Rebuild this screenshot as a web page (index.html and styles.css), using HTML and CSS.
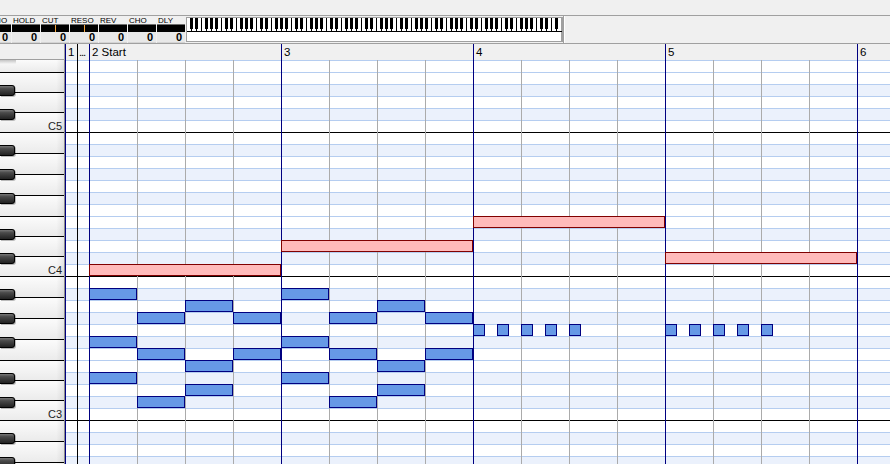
FILE: index.html
```html
<!DOCTYPE html>
<html lang="en">
<head>
<meta charset="utf-8">
<title>Piano Roll</title>
<link rel="stylesheet" href="styles.css">
</head>
<body>
<div class="app">
  <div class="topbar"></div>

  <div class="toolbar">
    <div class="ctl ctl-first"><div class="ctl-label">ECHO</div><div class="ctl-bar"></div><div class="ctl-val">0</div></div>
    <div class="ctl"><div class="ctl-label">HOLD</div><div class="ctl-bar"></div><div class="ctl-val">0</div></div>
    <div class="ctl"><div class="ctl-label">CUT</div><div class="ctl-bar ctl-bar-mid"></div><div class="ctl-val">0</div></div>
    <div class="ctl"><div class="ctl-label">RESO</div><div class="ctl-bar ctl-bar-mid"></div><div class="ctl-val">0</div></div>
    <div class="ctl"><div class="ctl-label">REV</div><div class="ctl-bar"></div><div class="ctl-val">0</div></div>
    <div class="ctl"><div class="ctl-label">CHO</div><div class="ctl-bar"></div><div class="ctl-val">0</div></div>
    <div class="ctl"><div class="ctl-label">DLY</div><div class="ctl-bar"></div><div class="ctl-val">0</div></div>
    <div class="mini-kb">
      <svg class="mini-kb-svg" width="375" height="23" viewBox="0 0 375 23">
        <defs>
          <pattern id="octave" width="35" height="23" patternUnits="userSpaceOnUse">
            <rect x="4" y="0" width="1" height="14" fill="#000"/>
            <rect x="9" y="0" width="1" height="14" fill="#000"/>
            <rect x="14" y="0" width="1" height="14" fill="#000"/>
            <rect x="19" y="0" width="1" height="14" fill="#000"/>
            <rect x="24" y="0" width="1" height="14" fill="#000"/>
            <rect x="29" y="0" width="1" height="14" fill="#000"/>
            <rect x="34" y="0" width="1" height="14" fill="#000"/>
            <rect x="3" y="0" width="3" height="11" fill="#000"/>
            <rect x="8" y="0" width="3" height="11" fill="#000"/>
            <rect x="18" y="0" width="3" height="11" fill="#000"/>
            <rect x="23" y="0" width="3" height="11" fill="#000"/>
            <rect x="28" y="0" width="3" height="11" fill="#000"/>
          </pattern>
        </defs>
        <rect x="0" y="0" width="375" height="23" fill="#fff"/>
        <rect x="0" y="0" width="373" height="14" fill="url(#octave)"/>
        <rect x="374" y="0" width="1" height="23" fill="#a0a0a0"/>
        <rect x="0" y="13" width="375" height="1" fill="#000"/>
      </svg>
    </div>
    <div class="tb-sep"></div>
  </div>

  <div class="ruler">
    <div class="ruler-corner"></div>
    <div class="ruler-track">
      <div class="seg seg-short">1</div>
      <div class="seg seg-short seg-dots">...</div>
      <div class="seg seg-measure">2 Start</div>
      <div class="seg seg-measure">3</div>
      <div class="seg seg-measure">4</div>
      <div class="seg seg-measure">5</div>
      <div class="seg seg-measure">6</div>
    </div>
  </div>

  <div class="roll">
    <div class="keyboard">
      <div class="white-keys">
        <div class="wk wk-top"></div>
        <div class="wk wk-s"></div>
        <div class="wk wk-s"></div>
        <div class="wk wk-s"><span class="clabel">C5</span></div>
        <div class="wk wk-l"></div>
        <div class="wk wk-l"></div>
        <div class="wk wk-l"></div>
        <div class="wk wk-l"></div>
        <div class="wk wk-s"></div>
        <div class="wk wk-s"></div>
        <div class="wk wk-s"><span class="clabel">C4</span></div>
        <div class="wk wk-l"></div>
        <div class="wk wk-l"></div>
        <div class="wk wk-l"></div>
        <div class="wk wk-l"></div>
        <div class="wk wk-s"></div>
        <div class="wk wk-s"></div>
        <div class="wk wk-s"><span class="clabel">C3</span></div>
        <div class="wk wk-l"></div>
        <div class="wk wk-l"></div>
        <div class="wk wk-l"></div>
      </div>
      <div class="black-keys">
        <div class="kr"></div>
        <div class="kr"></div>
        <div class="kr"><div class="bk"></div></div>
        <div class="kr"></div>
        <div class="kr"><div class="bk"></div></div>
        <div class="kr"></div>
        <div class="kr"></div>
        <div class="kr"><div class="bk"></div></div>
        <div class="kr"></div>
        <div class="kr"><div class="bk"></div></div>
        <div class="kr"></div>
        <div class="kr"><div class="bk"></div></div>
        <div class="kr"></div>
        <div class="kr"></div>
        <div class="kr"><div class="bk"></div></div>
        <div class="kr"></div>
        <div class="kr"><div class="bk"></div></div>
        <div class="kr"></div>
        <div class="kr"></div>
        <div class="kr"><div class="bk"></div></div>
        <div class="kr"></div>
        <div class="kr"><div class="bk"></div></div>
        <div class="kr"></div>
        <div class="kr"><div class="bk"></div></div>
        <div class="kr"></div>
        <div class="kr"></div>
        <div class="kr"><div class="bk"></div></div>
        <div class="kr"></div>
        <div class="kr"><div class="bk"></div></div>
        <div class="kr"></div>
        <div class="kr"></div>
        <div class="kr"><div class="bk"></div></div>
        <div class="kr"></div>
        <div class="kr"><div class="bk"></div></div>
      </div>
    </div>

    <div class="grid">
      <div class="gcol gcol-short"></div>
      <div class="gcol gcol-short gcol-dots"></div>
      <div class="gcol gcol-measure"></div>
      <div class="gcol gcol-measure"></div>
      <div class="gcol gcol-measure"></div>
      <div class="gcol gcol-measure"></div>
      <div class="gcol gcol-measure"></div>

      <div class="notes">
        <div class="note note-pink" style="left:24px;top:204px"></div>
        <div class="note note-pink" style="left:216px;top:180px"></div>
        <div class="note note-pink" style="left:408px;top:156px"></div>
        <div class="note note-pink" style="left:600px;top:192px"></div>

        <div class="note note-blue" style="left:24px;top:228px"></div>
        <div class="note note-blue" style="left:120px;top:240px"></div>
        <div class="note note-blue" style="left:72px;top:252px"></div>
        <div class="note note-blue" style="left:168px;top:252px"></div>
        <div class="note note-blue" style="left:24px;top:276px"></div>
        <div class="note note-blue" style="left:72px;top:288px"></div>
        <div class="note note-blue" style="left:168px;top:288px"></div>
        <div class="note note-blue" style="left:120px;top:300px"></div>
        <div class="note note-blue" style="left:24px;top:312px"></div>
        <div class="note note-blue" style="left:120px;top:324px"></div>
        <div class="note note-blue" style="left:72px;top:336px"></div>

        <div class="note note-blue" style="left:216px;top:228px"></div>
        <div class="note note-blue" style="left:312px;top:240px"></div>
        <div class="note note-blue" style="left:264px;top:252px"></div>
        <div class="note note-blue" style="left:360px;top:252px"></div>
        <div class="note note-blue" style="left:216px;top:276px"></div>
        <div class="note note-blue" style="left:264px;top:288px"></div>
        <div class="note note-blue" style="left:360px;top:288px"></div>
        <div class="note note-blue" style="left:312px;top:300px"></div>
        <div class="note note-blue" style="left:216px;top:312px"></div>
        <div class="note note-blue" style="left:312px;top:324px"></div>
        <div class="note note-blue" style="left:264px;top:336px"></div>

        <div class="note note-tick" style="left:408px;top:264px"></div>
        <div class="note note-tick" style="left:432px;top:264px"></div>
        <div class="note note-tick" style="left:456px;top:264px"></div>
        <div class="note note-tick" style="left:480px;top:264px"></div>
        <div class="note note-tick" style="left:504px;top:264px"></div>
        <div class="note note-tick" style="left:600px;top:264px"></div>
        <div class="note note-tick" style="left:624px;top:264px"></div>
        <div class="note note-tick" style="left:648px;top:264px"></div>
        <div class="note note-tick" style="left:672px;top:264px"></div>
        <div class="note note-tick" style="left:696px;top:264px"></div>
      </div>
    </div>
  </div>
</div>
</body>
</html>
```

FILE: styles.css
```css
html, body {
  margin: 0;
  padding: 0;
}

body {
  width: 890px;
  height: 464px;
  overflow: hidden;
  background: #f0f0f0;
  font-family: "Liberation Sans", Arial, sans-serif;
  color: #000;
}

.app {
  display: flex;
  flex-direction: column;
  width: 890px;
  height: 464px;
  overflow: hidden;
}

/* ---------- top strip ---------- */
.topbar {
  flex: none;
  height: 15px;
  border-bottom: 1px solid #a0a0a0;
}

/* ---------- controller toolbar ---------- */
.toolbar {
  flex: none;
  display: flex;
  height: 27px;
  border-bottom: 1px solid #a0a0a0;
}

.ctl {
  flex: none;
  width: 28px;
  margin-right: 1px;
  display: flex;
  flex-direction: column;
}

.ctl-first {
  margin-left: -17px;
}

.ctl-label {
  height: 8px;
  font-size: 8px;
  line-height: 10px;
  padding-left: 1px;
  white-space: nowrap;
  overflow: visible;
}

.ctl-bar {
  box-sizing: border-box;
  height: 8px;
  background: #000;
  border-top: 1px solid #6e6e6e;
}

.ctl-bar-mid {
  background: linear-gradient(90deg, #000 0 14px, #f5a53c 14px 15px, #000 15px);
}

.ctl-val {
  box-sizing: border-box;
  height: 11px;
  background: #e8e8e8;
  border-bottom: 1px solid #d4d4d4;
  font-size: 11px;
  font-weight: bold;
  line-height: 11px;
  text-align: right;
  padding-right: 3px;
}

.mini-kb {
  flex: none;
  margin-top: 1px;
  width: 375px;
  height: 23px;
  border: 1px solid #a0a0a0;
  background: #fff;
}

.mini-kb-svg {
  display: block;
}

.tb-sep {
  flex: none;
  width: 1px;
  border-left: 1px solid #a0a0a0;
  background: #fff;
}

/* ---------- measure ruler ---------- */
.ruler {
  flex: none;
  display: flex;
  height: 16px;
}

.ruler-corner {
  flex: none;
  box-sizing: border-box;
  width: 65px;
  border-right: 1px solid #a0a0a0;
  border-bottom: 1px solid #a0a0a0;
}

.ruler-track {
  flex: 1;
  display: flex;
  overflow: hidden;
}

.seg {
  flex: none;
  box-sizing: border-box;
  border-left: 1px solid #000080;
  padding-left: 2px;
  font-size: 11.5px;
  line-height: 16px;
  white-space: nowrap;
  overflow: hidden;
}

.seg-short {
  width: 12px;
}

.seg-dots {
  border-left-color: #000;
  padding-left: 1px;
  letter-spacing: -1.2px;
}

.seg-measure {
  width: 192px;
}

/* ---------- piano roll ---------- */
.roll {
  flex: none;
  display: flex;
  height: 404px;
}

.keyboard {
  flex: none;
  position: relative;
  box-sizing: border-box;
  width: 65px;
  height: 404px;
  border-right: 1px solid #8c8c8c;
  overflow: hidden;
}

.keyboard::before {
  content: "";
  position: absolute;
  left: 0;
  top: 0;
  width: 16px;
  height: 4px;
  background: linear-gradient(rgba(0, 0, 0, 0.22), rgba(0, 0, 0, 0));
  z-index: 2;
}

.white-keys {
  display: flex;
  flex-direction: column;
}

.wk {
  flex: none;
  box-sizing: border-box;
  border-bottom: 1px solid #000;
  background:
    linear-gradient(90deg, rgba(0, 0, 0, 0) 88%, rgba(0, 0, 0, 0.07)),
    linear-gradient(180deg, #fbfbfb, #ebebeb);
  display: flex;
  justify-content: flex-end;
  align-items: flex-end;
}

.wk-top { height: 13px; }
.wk-s { height: 20px; }
.wk-l { height: 21px; }

.clabel {
  font-size: 11px;
  line-height: 11px;
  padding-right: 2px;
  color: #1e1e1e;
}

.black-keys {
  position: absolute;
  left: 0;
  top: 0;
  right: 0;
  display: flex;
  flex-direction: column;
}

.kr {
  flex: none;
  height: 12px;
}

.bk {
  box-sizing: border-box;
  margin-top: 1px;
  width: 15px;
  height: 11px;
  border: 1px solid #000;
  border-left: none;
  border-radius: 0 3px 3px 0;
  background: linear-gradient(180deg, #777 0, #4a4a4a 30%, #333 70%, #222 100%);
  box-shadow: 1px 1px 0 rgba(0, 0, 0, 0.25);
}

.grid {
  flex: 1;
  position: relative;
  display: flex;
  overflow: hidden;
  background-color: #fff;
  background-image:
    linear-gradient(180deg, #000 0 1px, rgba(0, 0, 0, 0) 1px),
    linear-gradient(180deg, #b5cdf0 0 1px, rgba(0, 0, 0, 0) 1px),
    linear-gradient(180deg,
      rgba(0, 0, 0, 0) 0 12px, #ebf1fc 12px 24px,
      rgba(0, 0, 0, 0) 24px 36px, #ebf1fc 36px 48px,
      rgba(0, 0, 0, 0) 48px 60px, #ebf1fc 60px 72px,
      rgba(0, 0, 0, 0) 72px 96px, #ebf1fc 96px 108px,
      rgba(0, 0, 0, 0) 108px 120px, #ebf1fc 120px 132px,
      rgba(0, 0, 0, 0) 132px 144px);
  background-size: 100% 144px, 100% 12px, 100% 144px;
  background-position: 0 72px, 0 0, 0 72px;
  background-repeat: repeat;
}

.gcol {
  flex: none;
  box-sizing: border-box;
  height: 100%;
  border-left: 1px solid #000080;
}

.gcol-short {
  width: 12px;
}

.gcol-dots {
  border-left-color: #000;
}

.gcol-measure {
  width: 192px;
  background-image: repeating-linear-gradient(90deg, rgba(0, 0, 0, 0) 0 47px, #ababab 47px 48px);
  background-origin: padding-box;
}

.notes {
  position: absolute;
  left: 0;
  top: 0;
  right: 0;
  bottom: 0;
}

.note {
  position: absolute;
  box-sizing: border-box;
  height: 12px;
}

.note-pink {
  width: 192px;
  background: #ffbaba;
  border: 1px solid #800000;
}

.note-blue {
  width: 48px;
  background: #6699e6;
  border: 1px solid #000080;
}

.note-tick {
  width: 12px;
  background: #6699e6;
  border: 1px solid #000080;
}
```
